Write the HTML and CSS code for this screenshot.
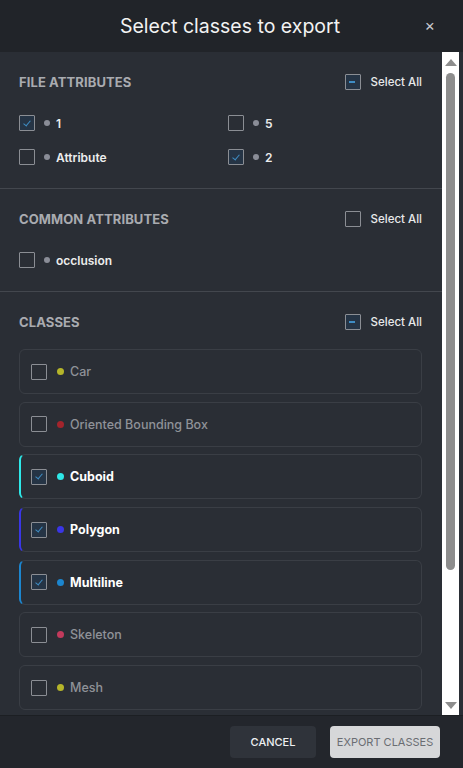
FILE: index.html
```html
<!DOCTYPE html>
<html lang="en">
  <head>
    <meta charset="UTF-8" />
    <meta name="viewport" content="width=device-width, initial-scale=1.0" />
    <title>Select classes to export</title>
    <link rel="stylesheet" href="styles.css">
  </head>
  <body>
    <div class="modal">
      <div class="modal-header">
        <h1 class="modal-title">Select classes to export</h1>
        <button class="close-btn" aria-label="close">×</button>
      </div>

      <div class="modal-body">
        <div class="scroll-content">
          <!-- File attributes -->
          <section class="group">
            <div class="group-head">
              <h2 class="group-title">FILE ATTRIBUTES</h2>
              <label class="select-all">
                <span class="box partial"></span>
                Select All
              </label>
            </div>
            <div class="attr-grid">
              <label class="attr">
                <span class="box checked"></span>
                <span class="dot"></span>1
              </label>
              <label class="attr">
                <span class="box"></span>
                <span class="dot"></span>5
              </label>
              <label class="attr">
                <span class="box"></span>
                <span class="dot"></span>Attribute
              </label>
              <label class="attr">
                <span class="box checked"></span>
                <span class="dot"></span>2
              </label>
            </div>
          </section>

          <!-- Common attributes -->
          <section class="group">
            <div class="group-head">
              <h2 class="group-title">COMMON ATTRIBUTES</h2>
              <label class="select-all">
                <span class="box"></span>
                Select All
              </label>
            </div>
            <div class="attr-grid">
              <label class="attr">
                <span class="box"></span>
                <span class="dot"></span>occlusion
              </label>
            </div>
          </section>

          <!-- Classes -->
          <section class="group classes">
            <div class="group-head">
              <h2 class="group-title">CLASSES</h2>
              <label class="select-all">
                <span class="box partial"></span>
                Select All
              </label>
            </div>
            <div class="class-list" id="classList"></div>
          </section>
        </div>

        <div class="scrollbar">
          <span class="arrow up"></span>
          <div class="track">
            <div class="thumb"></div>
          </div>
          <span class="arrow down"></span>
        </div>
      </div>

      <div class="modal-footer">
        <button class="btn btn-cancel">CANCEL</button>
        <button class="btn btn-export">EXPORT CLASSES</button>
      </div>
    </div>

    <script>
      const CLASSES = [
        { name: "Car", color: "#b5b52a", checked: false },
        { name: "Oriented Bounding Box", color: "#a3242c", checked: false },
        { name: "Cuboid", color: "#2ee8e8", checked: true },
        { name: "Polygon", color: "#3a36e6", checked: true },
        { name: "Multiline", color: "#1c86cf", checked: true },
        { name: "Skeleton", color: "#c23a5c", checked: false },
        { name: "Mesh", color: "#b5b52a", checked: false },
      ];

      const list = document.getElementById("classList");

      CLASSES.forEach((item) => {
        const card = document.createElement("label");
        card.className = "class-card" + (item.checked ? " active" : "");
        card.style.borderLeftColor = item.checked ? item.color : "";

        const box = document.createElement("span");
        box.className = "box" + (item.checked ? " checked" : "");

        const dot = document.createElement("span");
        dot.className = "class-dot";
        dot.style.background = item.color;

        const name = document.createElement("span");
        name.className = "class-name";
        name.textContent = item.name;

        card.append(box, dot, name);
        list.appendChild(card);
      });
    </script>
  </body>
</html>
```

FILE: styles.css
```css
* {
  margin: 0;
  padding: 0;
  box-sizing: border-box;
}

body {
  width: 463px;
  height: 768px;
  background: #1e2126;
  font-family: Inter, "Noto Sans", sans-serif;
  color: #fff;
  overflow: hidden;
}

.modal {
  width: 463px;
  height: 768px;
  display: flex;
  flex-direction: column;
  background: #2a2e35;
}

.modal-header {
  height: 52px;
  flex-shrink: 0;
  background: #212429;
  display: flex;
  align-items: center;
  justify-content: center;
  position: relative;
}

.modal-title {
  font-size: 19.5px;
  font-weight: 400;
  color: #f2f2f2;
  margin-left: -3px;
}

.close-btn {
  position: absolute;
  right: 28px;
  top: 15px;
  background: none;
  border: none;
  color: #c9cbd0;
  font-size: 16px;
  font-family: inherit;
  cursor: pointer;
}

.modal-body {
  flex: 1;
  display: flex;
  min-height: 0;
}

.scroll-content {
  flex: 1;
  overflow: hidden;
}

/* sections */
.group {
  border-bottom: 1px solid #43474e;
  padding: 21px 20px 23px 19px;
}

.group-head {
  display: flex;
  align-items: center;
  justify-content: space-between;
  height: 18px;
}

.group-title {
  font-size: 13px;
  font-weight: 700;
  color: #a9abb0;
  letter-spacing: 0.1px;
}

.select-all {
  display: flex;
  align-items: center;
  gap: 10px;
  font-size: 11.5px;
  font-weight: 500;
  color: #e8e9eb;
}

.attr-grid {
  display: grid;
  grid-template-columns: 209px 1fr;
  row-gap: 18px;
  margin-top: 24px;
}

.attr {
  display: flex;
  align-items: center;
  font-size: 12px;
  font-weight: 600;
  color: #eceded;
  height: 16px;
}

.dot {
  width: 6px;
  height: 6px;
  border-radius: 50%;
  background: #8a8d97;
  margin: 0 6px 0 9px;
}

/* checkboxes */
.box {
  width: 16px;
  height: 16px;
  border: 1.5px solid #8b8e94;
  border-radius: 1px;
  flex-shrink: 0;
  position: relative;
}

.box.checked,
.box.partial {
  background: #253445;
}

.box.checked::after {
  content: "";
  position: absolute;
  left: 4.5px;
  top: 2.5px;
  width: 3px;
  height: 6px;
  border: solid #3f8dc4;
  border-width: 0 1.5px 1.5px 0;
  transform: rotate(40deg);
}

.box.partial::after {
  content: "";
  position: absolute;
  left: 3.5px;
  top: 5.5px;
  width: 6px;
  height: 2px;
  background: #3f8dc4;
}

/* class cards */
.group.classes {
  border-bottom: none;
  padding-bottom: 8px;
}

.class-list {
  display: flex;
  flex-direction: column;
  gap: 7.7px;
  margin-top: 18px;
}

.class-card {
  height: 45px;
  flex-shrink: 0;
  display: flex;
  align-items: center;
  padding-left: 11px;
  border: 1px solid #3a3e45;
  border-radius: 6px;
  background: #2a2e35;
}

.class-card.active {
  border-left-width: 2px;
  padding-left: 10px;
}

.class-dot {
  width: 7px;
  height: 7px;
  border-radius: 50%;
  margin: 0 6px 0 10px;
}

.class-name {
  font-size: 12.5px;
  font-weight: 500;
  color: #8f9298;
}

.class-card.active .class-name {
  color: #fff;
  font-weight: 700;
}

/* scrollbar */
.scrollbar {
  width: 21px;
  flex-shrink: 0;
  display: flex;
  flex-direction: column;
  align-items: center;
  background: #fff;
  border-right: 4px solid #2a2e35;
  padding: 5px 0 4px;
}

.track {
  flex: 1;
  width: 100%;
  padding: 7px 2px 4px;
}

.thumb {
  height: 497px;
  background: #8d8d8d;
  border-radius: 6px;
  margin: 0 2px;
}

.arrow {
  width: 0;
  height: 0;
  border-left: 6px solid transparent;
  border-right: 6px solid transparent;
}

.arrow.up {
  border-bottom: 7px solid #8d8d8d;
  margin-top: 2px;
}

.arrow.down {
  border-top: 7px solid #8d8d8d;
  margin-bottom: 2px;
}

/* footer */
.modal-footer {
  height: 53px;
  flex-shrink: 0;
  background: #23262c;
  display: flex;
  align-items: center;
  justify-content: flex-end;
  gap: 14px;
  padding-right: 23px;
  border-top: 1px solid #1c1f23;
}

.btn {
  height: 32px;
  border: none;
  border-radius: 4px;
  font-family: inherit;
  font-size: 11px;
  font-weight: 500;
  cursor: pointer;
}

.btn-cancel {
  width: 86px;
  background: #2f333a;
  color: #eef0f2;
}

.btn-export {
  width: 110px;
  background: #d6d7d9;
  color: #6a6d72;
  font-weight: 400;
}
```
